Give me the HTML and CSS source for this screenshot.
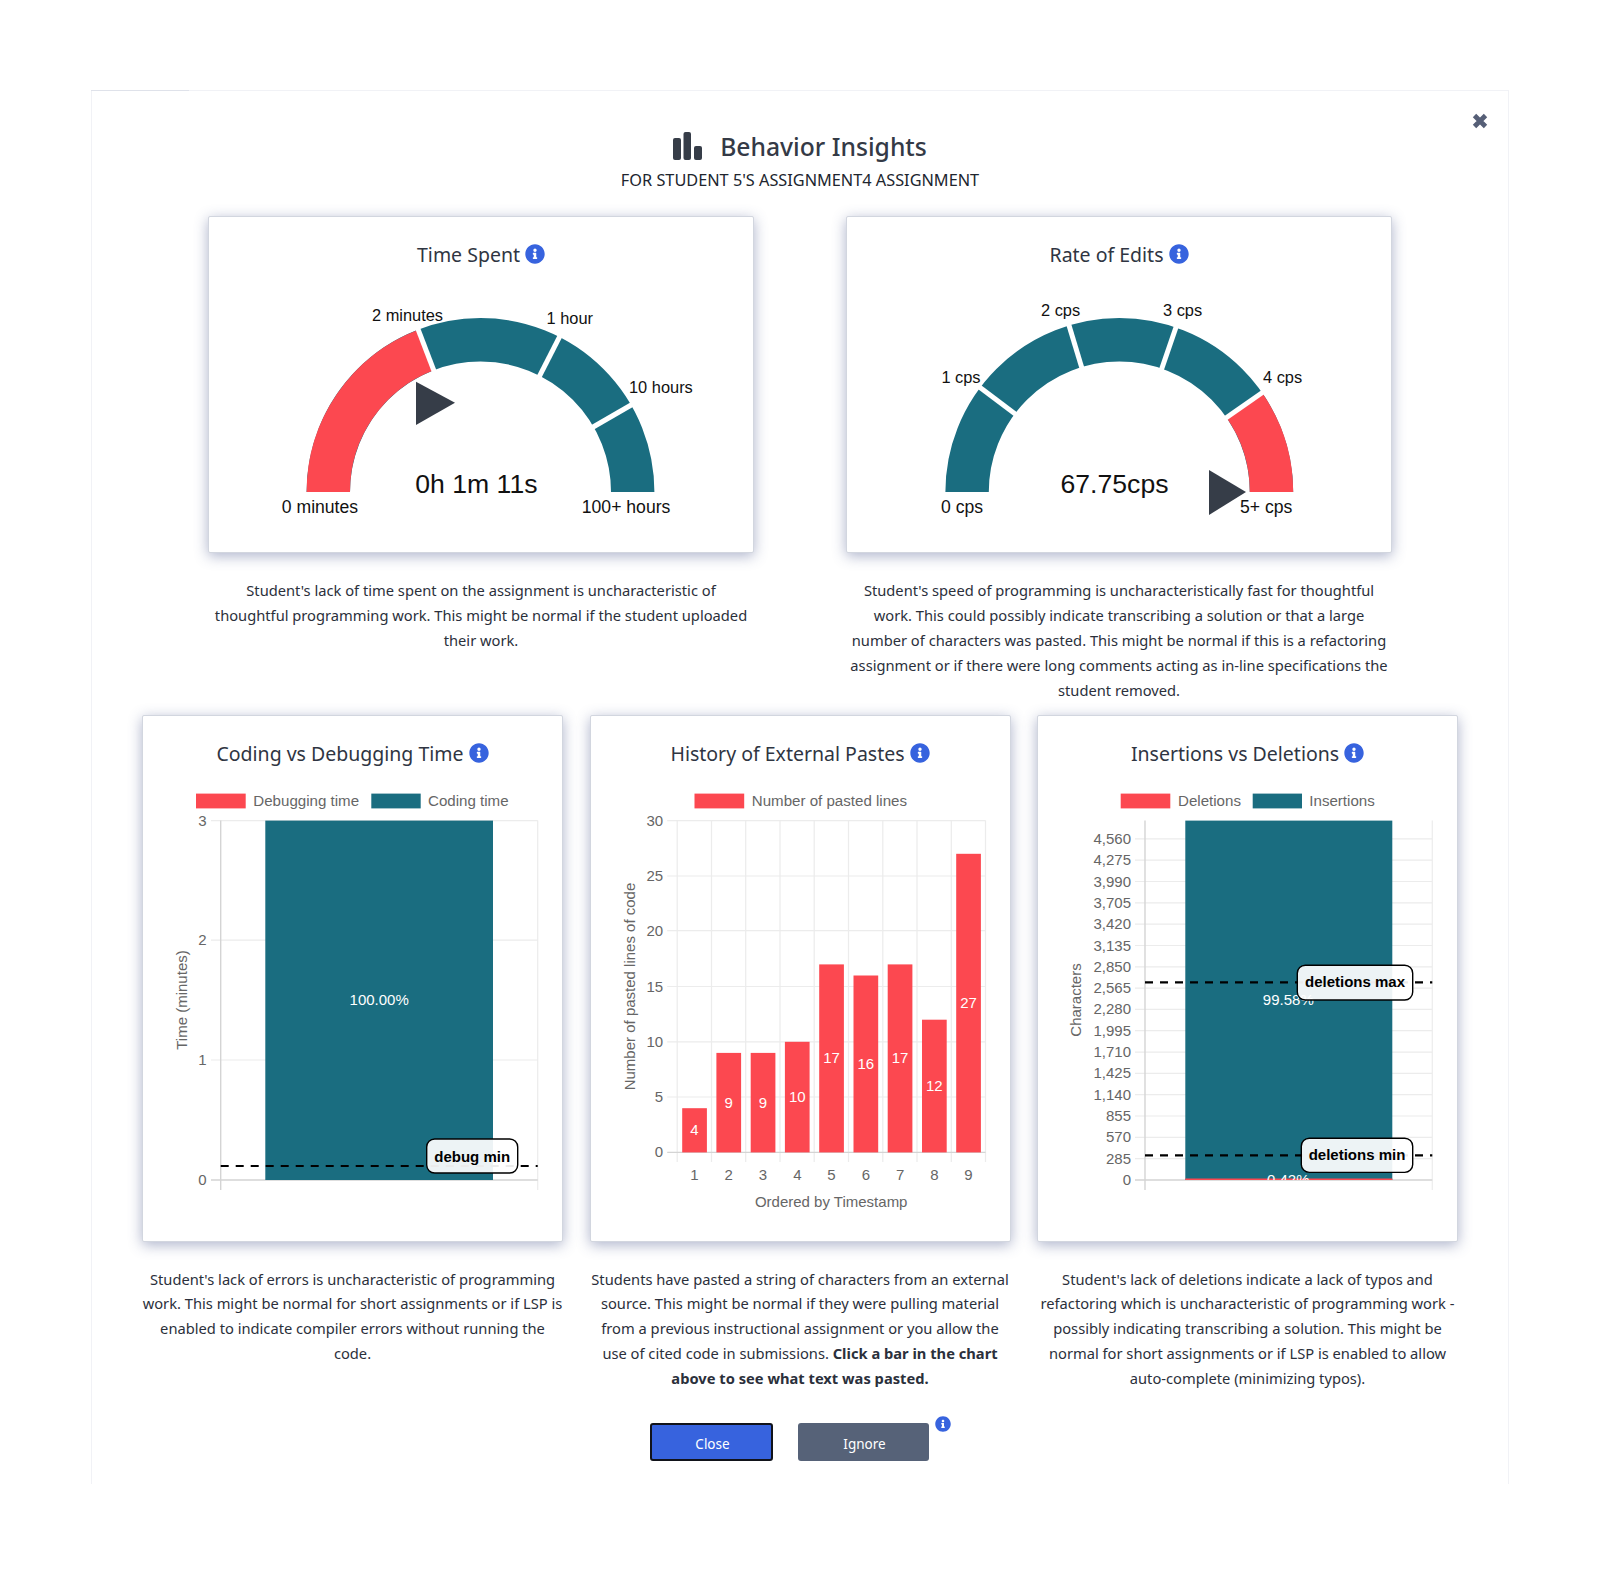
FILE: index.html
```html
<!DOCTYPE html>
<html>
<head>
  <meta charset="UTF-8">
  <meta name="viewport" content="width=device-width, initial-scale=1.0">
  <title>Behavior Insights</title>
  <link rel="stylesheet" href="styles.css">
</head>
<body>

<svg class="defs" width="0" height="0">
  <symbol id="info" viewBox="0 0 512 512">
    <path d="M256 8C119.043 8 8 119.083 8 256c0 136.997 111.043 248 248 248s248-111.003 248-248C504 119.083 392.957 8 256 8zm0 110c23.196 0 42 18.804 42 42s-18.804 42-42 42-42-18.804-42-42 18.804-42 42-42zm56 254c0 6.627-5.373 12-12 12h-88c-6.627 0-12-5.373-12-12v-24c0-6.627 5.373-12 12-12h12v-64h-12c-6.627 0-12-5.373-12-12v-24c0-6.627 5.373-12 12-12h64c6.627 0 12 5.373 12 12v100h12c6.627 0 12 5.373 12 12v24z"/>
  </symbol>
</svg>

<div class="modal">
  <svg class="close-x" viewBox="0 0 16 16"><path d="M2.5 2.5l11 11M13.5 2.5l-11 11"/></svg>

  <div class="modal-head">
    <h1 class="modal-title">
      <svg class="title-icon" viewBox="0 0 29 28">
        <rect x="0" y="6" width="8" height="22" rx="2"/>
        <rect x="10.5" y="0" width="7.5" height="28" rx="2"/>
        <rect x="21" y="14" width="8" height="14" rx="2"/>
      </svg>
      Behavior Insights
    </h1>
    <p class="modal-sub">For Student 5's assignment4 assignment</p>
  </div>

  <div class="row row-two">
    <div class="col">
      <div class="card">
        <h2 class="card-title">Time Spent <svg class="info"><use href="#info"/></svg></h2>
        <svg class="gauge" viewBox="0 0 546 240">
          <path class="arc-teal" d="M120.3 206A152.2 152.2 0 0 1 424.7 206"/>
          <path class="arc-red" pathLength="180" stroke-dasharray="69 200" d="M120.3 206A152.2 152.2 0 0 1 424.7 206"/>
          <line class="sep" x1="227.7" y1="89.3" x2="208" y2="37.9"/>
          <line class="sep" x1="329.2" y1="94.6" x2="354.2" y2="45.6"/>
          <line class="sep" x1="380.8" y1="143.5" x2="428.4" y2="116"/>
          <polygon class="pointer" points="208,95.7 247,116.7 208,139"/>
          <text class="g-label" x="164" y="34.7">2 minutes</text>
          <text class="g-label" x="338.5" y="38.3">1 hour</text>
          <text class="g-label" x="421" y="106.7">10 hours</text>
          <text class="g-label-low" x="73.8" y="227">0 minutes</text>
          <text class="g-label-low" x="373.8" y="227">100+ hours</text>
          <text class="g-value" x="268.4" y="206.7">0h 1m 11s</text>
        </svg>
      </div>
      <p class="desc">Student's lack of time spent on the assignment is uncharacteristic of thoughtful programming work. This might be normal if the student uploaded their work.</p>
    </div>

    <div class="col">
      <div class="card">
        <h2 class="card-title">Rate of Edits <svg class="info"><use href="#info"/></svg></h2>
        <svg class="gauge" viewBox="0 0 546 240">
          <path class="arc-teal" d="M121.1 206A152.2 152.2 0 0 1 425.5 206"/>
          <path class="arc-red" pathLength="180" stroke-dasharray="34.8 200" d="M425.5 206A152.2 152.2 0 0 0 121.1 206"/>
          <line class="sep" x1="173.3" y1="131" x2="129.4" y2="97.9"/>
          <line class="sep" x1="237.2" y1="86.4" x2="221.3" y2="33.7"/>
          <line class="sep" x1="314" y1="87.8" x2="331.9" y2="35.8"/>
          <line class="sep" x1="375.9" y1="134.7" x2="421.1" y2="103.3"/>
          <text class="g-label" x="195" y="29.7">2 cps</text>
          <text class="g-label" x="317" y="29.7">3 cps</text>
          <text class="g-label" x="95.4" y="97.3">1 cps</text>
          <text class="g-label" x="417" y="97.3">4 cps</text>
          <text class="g-label-low" x="95" y="227">0 cps</text>
          <text class="g-label-low" x="394" y="227">5+ cps</text>
          <polygon class="pointer" points="363,184 400,206 363,229"/>
          <text class="g-value" x="268.5" y="206.7">67.75cps</text>
        </svg>
      </div>
      <p class="desc">Student's speed of programming is uncharacteristically fast for thoughtful work. This could possibly indicate transcribing a solution or that a large number of characters was pasted. This might be normal if this is a refactoring assignment or if there were long comments acting as in-line specifications the student removed.</p>
    </div>
  </div>

  <div class="row row-three">
    <div class="col">
      <div class="card card-chart">
        <h2 class="card-title">Coding vs Debugging Time <svg class="info"><use href="#info"/></svg></h2>
        <svg class="chart" viewBox="142 785 421 440">
          <rect class="red" x="196" y="793.6" width="49.7" height="14.8"/>
          <text class="legend" x="253.3" y="806.4">Debugging time</text>
          <rect class="teal" x="371.3" y="793.6" width="49.4" height="14.8"/>
          <text class="legend" x="428" y="806.4">Coding time</text>

          <path class="grid" d="M211 820.6H537.7M211 940.2H537.7M211 1060H537.7M537.7 820.6V1190"/>
          <path class="axis" d="M211 1180H537.7M220.7 820.6V1190"/>
          <text class="tick" x="206.7" y="825.6">3</text>
          <text class="tick" x="206.7" y="945.2">2</text>
          <text class="tick" x="206.7" y="1065">1</text>
          <text class="tick" x="206.7" y="1185">0</text>
          <text class="axis-title" transform="translate(186.7 1000) rotate(-90)">Time (minutes)</text>

          <rect class="teal" x="265.3" y="820.6" width="227.7" height="359.4"/>
          <text class="bar-num" x="379.2" y="1005">100.00%</text>

          <line class="dash" x1="220.7" y1="1166" x2="537.7" y2="1166"/>
          <rect class="tag" x="426.7" y="1139" width="91" height="34" rx="8"/>
          <text class="tag-text" x="472.2" y="1161.5">debug min</text>
        </svg>
      </div>
      <p class="desc">Student's lack of errors is uncharacteristic of programming work. This might be normal for short assignments or if LSP is enabled to indicate compiler errors without running the code.</p>
    </div>

    <div class="col">
      <div class="card card-chart">
        <h2 class="card-title">History of External Pastes <svg class="info"><use href="#info"/></svg></h2>
        <svg class="chart" viewBox="589.5 785 421 440">
          <rect class="red" x="694" y="793.6" width="49.7" height="14.8"/>
          <text class="legend" x="751.3" y="806.4">Number of pasted lines</text>

          <path class="grid" d="M666.7 820.6H985M666.7 876H985M666.7 930.7H985M666.7 986.5H985M666.7 1041.9H985M666.7 1097H985"/>
          <path class="grid" d="M676.7 820.6V1162M711 820.6V1162M745.2 820.6V1162M779.5 820.6V1162M813.7 820.6V1162M848 820.6V1162M882.3 820.6V1162M916.5 820.6V1162M950.8 820.6V1162M985 820.6V1162"/>
          <path class="axis" d="M666.7 1152.4H985"/>
          <text class="tick" x="662.7" y="825.6">30</text>
          <text class="tick" x="662.7" y="881">25</text>
          <text class="tick" x="662.7" y="935.7">20</text>
          <text class="tick" x="662.7" y="991.5">15</text>
          <text class="tick" x="662.7" y="1046.9">10</text>
          <text class="tick" x="662.7" y="1102">5</text>
          <text class="tick" x="662.7" y="1157.4">0</text>
          <text class="axis-title" transform="translate(634.3 986.5) rotate(-90)">Number of pasted lines of code</text>

          <rect class="red" x="681.7" y="1108.2" width="24.7" height="44.2"/>
          <rect class="red" x="715.9" y="1052.9" width="24.7" height="99.5"/>
          <rect class="red" x="750.2" y="1052.9" width="24.7" height="99.5"/>
          <rect class="red" x="784.4" y="1041.8" width="24.7" height="110.6"/>
          <rect class="red" x="818.7" y="964.4" width="24.7" height="188"/>
          <rect class="red" x="853" y="975.5" width="24.7" height="176.9"/>
          <rect class="red" x="887.2" y="964.4" width="24.7" height="188"/>
          <rect class="red" x="921.5" y="1019.7" width="24.7" height="132.7"/>
          <rect class="red" x="955.7" y="853.8" width="24.7" height="298.6"/>

          <text class="bar-num" x="694" y="1135.3">4</text>
          <text class="bar-num" x="728.2" y="1107.6">9</text>
          <text class="bar-num" x="762.5" y="1107.6">9</text>
          <text class="bar-num" x="796.8" y="1102.1">10</text>
          <text class="bar-num" x="831" y="1063.4">17</text>
          <text class="bar-num" x="865.3" y="1069">16</text>
          <text class="bar-num" x="899.6" y="1063.4">17</text>
          <text class="bar-num" x="933.8" y="1091">12</text>
          <text class="bar-num" x="968" y="1008.1">27</text>

          <text class="tick-x" x="694" y="1180.4">1</text>
          <text class="tick-x" x="728.2" y="1180.4">2</text>
          <text class="tick-x" x="762.5" y="1180.4">3</text>
          <text class="tick-x" x="796.8" y="1180.4">4</text>
          <text class="tick-x" x="831" y="1180.4">5</text>
          <text class="tick-x" x="865.3" y="1180.4">6</text>
          <text class="tick-x" x="899.6" y="1180.4">7</text>
          <text class="tick-x" x="933.8" y="1180.4">8</text>
          <text class="tick-x" x="968" y="1180.4">9</text>
          <text class="tick-x" x="830.7" y="1206.8">Ordered by Timestamp</text>
        </svg>
      </div>
      <p class="desc">Students have pasted a string of characters from an external source. This might be normal if they were pulling material from a previous instructional assignment or you allow the use of cited code in submissions. <strong>Click a bar in the chart above to see what text was pasted.</strong></p>
    </div>

    <div class="col">
      <div class="card card-chart">
        <h2 class="card-title">Insertions vs Deletions <svg class="info"><use href="#info"/></svg></h2>
        <svg class="chart" viewBox="1037 785 421 440">
          <defs>
            <clipPath id="plot-clip"><rect x="1145" y="820" width="288" height="360"/></clipPath>
          </defs>
          <rect class="red" x="1120.7" y="793.6" width="49.6" height="14.8"/>
          <text class="legend" x="1178" y="806.4">Deletions</text>
          <rect class="teal" x="1252.7" y="793.6" width="49.3" height="14.8"/>
          <text class="legend" x="1309.3" y="806.4">Insertions</text>

          <path class="grid" d="M1135 838.9H1432.3M1135 860.2H1432.3M1135 881.5H1432.3M1135 902.8H1432.3M1135 924.1H1432.3M1135 945.5H1432.3M1135 966.8H1432.3M1135 988.1H1432.3M1135 1009.4H1432.3M1135 1030.7H1432.3M1135 1052.1H1432.3M1135 1073.4H1432.3M1135 1094.7H1432.3M1135 1116H1432.3M1135 1137.3H1432.3M1135 1158.7H1432.3"/>
          <path class="grid" d="M1432.3 820.6V1190"/>
          <path class="axis" d="M1135 1180H1432.3M1145 820.6V1190"/>
          <text class="tick" x="1131" y="843.9">4,560</text>
          <text class="tick" x="1131" y="865.2">4,275</text>
          <text class="tick" x="1131" y="886.5">3,990</text>
          <text class="tick" x="1131" y="907.8">3,705</text>
          <text class="tick" x="1131" y="929.1">3,420</text>
          <text class="tick" x="1131" y="950.5">3,135</text>
          <text class="tick" x="1131" y="971.8">2,850</text>
          <text class="tick" x="1131" y="993.1">2,565</text>
          <text class="tick" x="1131" y="1014.4">2,280</text>
          <text class="tick" x="1131" y="1035.7">1,995</text>
          <text class="tick" x="1131" y="1057.1">1,710</text>
          <text class="tick" x="1131" y="1078.4">1,425</text>
          <text class="tick" x="1131" y="1099.7">1,140</text>
          <text class="tick" x="1131" y="1121">855</text>
          <text class="tick" x="1131" y="1142.3">570</text>
          <text class="tick" x="1131" y="1163.7">285</text>
          <text class="tick" x="1131" y="1185">0</text>
          <text class="axis-title" transform="translate(1081 1000) rotate(-90)">Characters</text>

          <rect class="teal" x="1185.3" y="820.6" width="207" height="359.4"/>
          <rect class="red" x="1185.3" y="1178.5" width="207" height="1.5"/>
          <text class="bar-num" x="1288.3" y="1005">99.58%</text>
          <text class="bar-num" x="1288.3" y="1185" clip-path="url(#plot-clip)">0.42%</text>

          <line class="dash" x1="1145" y1="982.4" x2="1432.3" y2="982.4"/>
          <line class="dash" x1="1145" y1="1155.4" x2="1432.3" y2="1155.4"/>
          <rect class="tag" x="1297.3" y="965.2" width="115.4" height="34.8" rx="8"/>
          <text class="tag-text" x="1355" y="987">deletions max</text>
          <rect class="tag" x="1301.3" y="1138.2" width="111.4" height="34.2" rx="8"/>
          <text class="tag-text" x="1357" y="1160">deletions min</text>
        </svg>
      </div>
      <p class="desc">Student's lack of deletions indicate a lack of typos and refactoring which is uncharacteristic of programming work - possibly indicating transcribing a solution. This might be normal for short assignments or if LSP is enabled to allow auto-complete (minimizing typos).</p>
    </div>
  </div>

  <div class="actions">
    <button class="btn btn-close">Close</button>
    <button class="btn btn-ignore">Ignore</button>
    <svg class="info info-small"><use href="#info"/></svg>
  </div>
</div>

</body>
</html>
```

FILE: styles.css
```css
html, body {
  margin: 0;
  padding: 0;
}
*, *:before, *:after {
  box-sizing: border-box;
}
body {
  background-color: #ffffff;
  color: #2b303b;
  font-family: "Noto Sans", sans-serif;
}
.defs {
  position: absolute;
}
.modal {
  position: relative;
  margin: 90px 91px 0;
  height: 1394px;
  padding: 0 51px;
  background-color: #ffffff;
  border: #f1f2f6 1px solid;
  border-bottom: 0;
}
.modal:before {
  content: "";
  position: absolute;
  top: -1px;
  left: -1px;
  width: 98px;
  height: 1px;
  background-color: #dfe2ea;
}
.close-x {
  position: absolute;
  top: 22px;
  right: 20px;
  width: 16px;
  height: 16px;
}
.close-x path {
  fill: none;
  stroke: #565f77;
  stroke-width: 4.8;
}
.modal-head {
  text-align: center;
}
.modal-title {
  display: flex;
  align-items: center;
  justify-content: center;
  gap: 18px;
  height: 38px;
  margin: 36px 0 0;
  color: #343a46;
  font-size: 24.7px;
  font-weight: 500;
}
.title-icon {
  width: 29px;
  height: 28px;
  fill: #363d48;
}
.modal-sub {
  margin: 3px 0 0;
  font-size: 16.3px;
  line-height: 24px;
  color: #20252e;
  text-transform: uppercase;
}
.row {
  display: grid;
  justify-content: center;
}
.row-two {
  grid-template-columns: 546px 546px;
  column-gap: 92px;
  margin-top: 24px;
  height: 499px;
}
.row-three {
  grid-template-columns: 421px 421px 421px;
  column-gap: 26.5px;
}
.row-three .desc {
  margin-top: 24.5px;
}
.col {
  min-width: 0;
}
.card {
  height: 337px;
  background-color: #ffffff;
  border: #d2d6df 1px solid;
  border-radius: 2px;
  box-shadow: 0 3px 14px rgba(60, 75, 130, 0.42);
}
.card-chart {
  height: 527px;
}
.card-title {
  display: flex;
  align-items: center;
  justify-content: center;
  gap: 5px;
  height: 32px;
  margin: 21px 0 16px;
  font-size: 19.5px;
  font-weight: 400;
  color: #2f3542;
}
.info {
  width: 20px;
  height: 20px;
  fill: #3763de;
}
.gauge, .chart {
  display: block;
  margin-left: -1px;
  overflow: visible;
}
.chart {
  height: 440px;
  width: 421px;
}
.gauge {
  width: 546px;
  height: 240px;
}
.arc-teal, .arc-red {
  fill: none;
  stroke-width: 43.4;
}
.arc-teal {
  stroke: #1a6d80;
}
.arc-red {
  stroke: #fc4850;
}
.sep {
  stroke: #ffffff;
  stroke-width: 5;
}
.pointer {
  fill: #363d48;
}
.gauge text, .chart text {
  font-family: "Liberation Sans", Arial, sans-serif;
}
.g-label {
  font-size: 16.4px;
  fill: #111111;
}
.g-label-low {
  font-size: 17.6px;
  fill: #111111;
}
.g-value {
  font-size: 26.6px;
  fill: #111111;
  text-anchor: middle;
}
.desc {
  margin: 25px 0 0;
  font-size: 14.7px;
  line-height: 24.9px;
  text-align: center;
  color: #2b303b;
}
.desc strong {
  font-weight: 700;
}
.red {
  fill: #fc4850;
}
.teal {
  fill: #1a6d80;
}
.grid {
  fill: none;
  stroke: #ececec;
  stroke-width: 1.2;
}
.axis {
  fill: none;
  stroke: #d4d4d4;
  stroke-width: 1.4;
}
.legend, .tick, .tick-x, .axis-title {
  font-size: 15px;
  fill: #666666;
}
.legend {
  font-size: 15.1px;
}
.tick {
  text-anchor: end;
}
.tick-x, .axis-title, .bar-num, .tag-text {
  text-anchor: middle;
}
.bar-num {
  font-size: 15px;
  fill: #ffffff;
}
.dash {
  stroke: #000000;
  stroke-width: 2.2;
  stroke-dasharray: 8 7;
}
.tag {
  fill: rgba(255, 255, 255, 0.92);
  stroke: #000000;
  stroke-width: 1.4;
}
.tag-text {
  font-size: 15px;
  font-weight: 700;
  fill: #000000;
}
.actions {
  display: flex;
  justify-content: center;
  margin-top: 32px;
}
.btn {
  height: 38px;
  padding: 3px 0 0 3px;
  border: 0;
  border-radius: 3px;
  color: #ffffff;
  font-family: "Noto Sans", sans-serif;
  font-size: 13.5px;
}
.btn-close {
  width: 123px;
  margin-right: 25px;
  background-color: #3763de;
  border: #11131a 2px solid;
}
.btn-ignore {
  width: 131px;
  background-color: #566278;
}
.info-small {
  width: 16px;
  height: 16px;
  margin: -7px 0 0 6px;
}
```
